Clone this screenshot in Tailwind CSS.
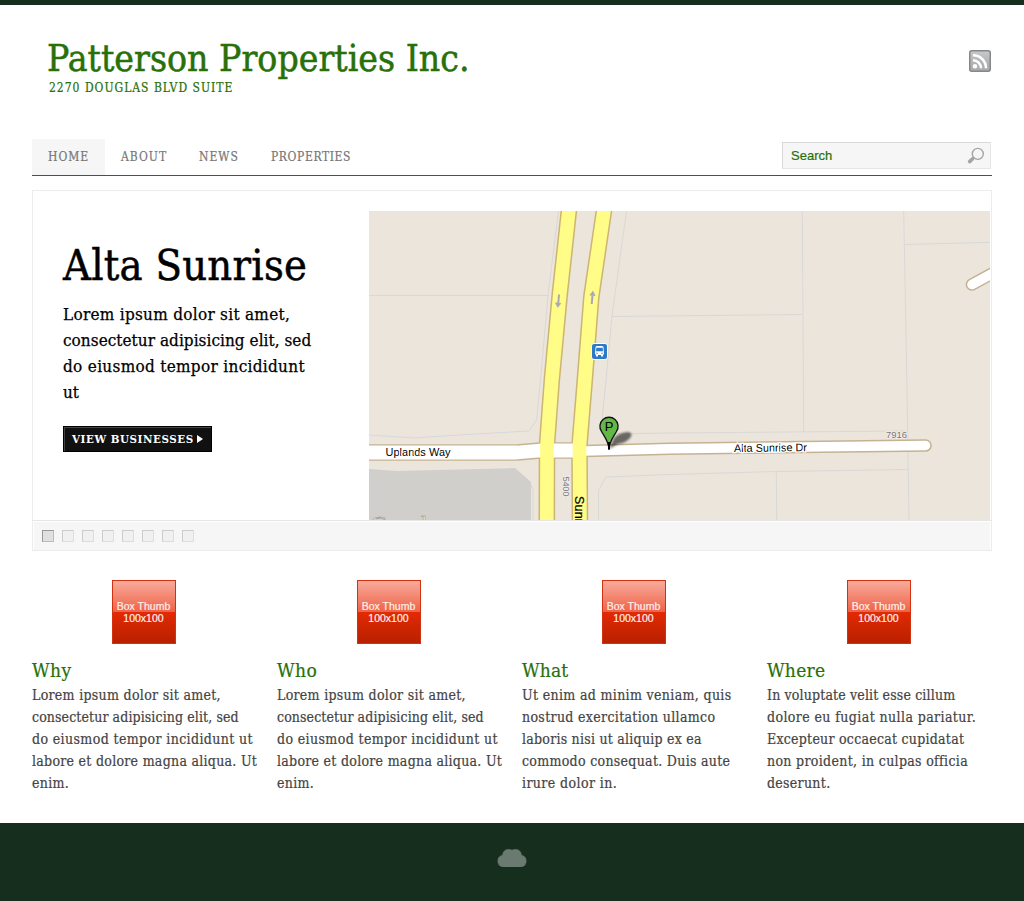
<!DOCTYPE html>
<html lang="en">
<head>
<meta charset="utf-8">
<title>Patterson Properties Inc.</title>
<script src="https://cdn.jsdelivr.net/npm/@tailwindcss/browser@4"></script>
</head>
<body class="bg-white border-t-[5px] border-[#152e1e] font-['Droid_Serif','DejaVu_Serif_Condensed','DejaVu_Serif',serif] font-stretch-condensed text-[14px] leading-[22px] text-[#444]">
<div class="mx-8 h-[818px]">
  <header class="flex justify-between h-[134px] pt-8">
    <div class="pl-[15px] text-[#287008]">
      <h1 class="text-[37px] leading-[44px] whitespace-nowrap [-webkit-text-stroke:0.5px_currentColor]">Patterson Properties Inc.</h1>
      <p class="-mt-px pl-0.5 text-[12px] leading-4 tracking-[1px] [-webkit-text-stroke:0.2px_currentColor]">2270 DOUGLAS BLVD SUITE</p>
    </div>
    <svg class="mt-[13px] mr-px" width="22" height="22" viewBox="0 0 22 22">
      <defs><linearGradient id="rss" x1="0" y1="0" x2="0" y2="1"><stop offset="0" stop-color="#c9cacb"/><stop offset=".5" stop-color="#b5b6b7"/><stop offset="1" stop-color="#a8aaab"/></linearGradient></defs>
      <rect x=".75" y=".75" width="20.5" height="20.5" rx="2" fill="url(#rss)" stroke="#858789" stroke-width="1.5"/>
      <circle cx="6" cy="16.200" r="2.200" fill="#fff"/>
      <path d="M4 10.200A8 8 0 0 1 12 18.200M4 5.200A13 13 0 0 1 17 18.200" fill="none" stroke="#fff" stroke-width="2.500"/>
    </svg>
  </header>
  <nav class="flex justify-between h-[37px] border-b border-[#287008] text-[12px] leading-9 tracking-[1px] text-[#777]">
    <ul class="flex [-webkit-text-stroke:0.2px_currentColor]">
      <li class="px-4 w-[73px] bg-[#f6f6f6]">HOME</li>
      <li class="px-4 w-[78px]">ABOUT</li>
      <li class="px-4 w-[72px]">NEWS</li>
      <li class="px-4 tracking-[0.6px]">PROPERTIES</li>
    </ul>
    <div class="flex items-center justify-between mt-[3px] mr-px w-[209px] h-[27px] pl-2 pr-[5px] bg-[#f6f6f6] border border-t-[#d9d9d9] border-l-[#d9d9d9] border-r-[#e6e6e6] border-b-[#e6e6e6] font-['Liberation_Sans',sans-serif] text-[13px] leading-[25px] tracking-normal text-[#287008] [-webkit-text-stroke:0.2px_currentColor]">
      Search
      <svg width="18" height="18" viewBox="0 0 18 18" fill="none" stroke="#a5a5a5"><circle cx="10.800" cy="6.900" r="5.500" stroke-width="1.400"/><path d="M6.600 10.800L5 12.400" stroke-width="2"/><path d="M5.600 11.800L2.600 14.600" stroke-width="3.600" stroke-linecap="round"/></svg>
    </div>
  </nav>

  <section class="mt-[14px] h-[361px] border border-[#ececec]">
    <div class="flex h-[329px]">
      <div class="w-[336px] pl-[30px] pt-12 text-black whitespace-nowrap">
        <h2 class="text-[43px] leading-[52px] tracking-[0.25px] [-webkit-text-stroke:0.5px_currentColor]">Alta Sunrise</h2>
        <p class="mt-[10px] text-[17px] leading-[26px] [-webkit-text-stroke:0.25px_currentColor]">
          <span class="block tracking-[0.28px]">Lorem ipsum dolor sit amet,</span>
          <span class="block tracking-[0.04px]">consectetur adipisicing elit, sed</span>
          <span class="block tracking-[0.31px]">do eiusmod tempor incididunt</span>
          <span class="block">ut</span>
        </p>
        <a class="mt-[21px] flex w-[149px] h-[26px] border border-black bg-[#111]">
          <span class="flex items-center flex-1 border-t border-l border-[#444] pl-[7px] text-white font-bold text-[11.5px] tracking-[0.55px] leading-6"><span class="-mt-0.5">VIEW BUSINESSES</span>
            <svg class="ml-[3px] -mt-0.5" width="6" height="8" viewBox="0 0 6 8"><path d="M0 0L6 4L0 8z" fill="#fff"/></svg></span>
        </a>
      </div>
      <svg class="mt-5 shrink-0" width="621" height="309" viewBox="369 211 621 309" font-family="Liberation Sans, Arial, sans-serif">
        <defs><filter id="blur" x="-50%" y="-50%" width="200%" height="200%"><feGaussianBlur stdDeviation="1.300"/></filter></defs>
        <rect x="369" y="211" width="621" height="309" fill="#ece5dc"/>
        <path d="M369 469L397 471L515 468L531 482V520H369z" fill="#d0cfcb"/>
        <g fill="none" stroke="#d9d8d7" stroke-width="1">
          <path d="M558.500 211L548 295L540.500 380L536.500 420L529 431L450 435.500L415 438L369 435"/>
          <path d="M369 295.500H548"/>
          <path d="M626.500 211L612 316L606 380L602 420L606 434L670 433L906 431"/>
          <path d="M612 316.500L803 314.500M802.300 211L803.700 432M903.700 211L907 390L909 520M905 244.500L990 242.300"/>
          <path d="M598.500 520V490L606 477L670 474.500L776 471.500L908 469.500M776.300 472L776.700 520M531 485L533 490V520"/>
        </g>
        <g fill="none" stroke-linejoin="round">
          <g stroke="#c5b292">
            <path d="M360 452.500H517L540 450.500L586 450.500" stroke-width="16.500"/>
            <path d="M575 451.200L670 448.700L925.500 445.500M972 284.500L1005 266.500" stroke-width="12.600" stroke-linecap="round"/>
          </g>
          <g stroke="#ccb472" stroke-width="16.600">
            <path d="M569.500 205L559.700 295L551.800 380L547 445L546.800 530"/>
            <path d="M604.800 205L591.300 297L584.800 380L579.500 445L580 530"/>
          </g>
          <g stroke="#fff">
            <path d="M360 452.500H517L540 450.500L586 450.500" stroke-width="13.800"/>
            <path d="M575 451.200L670 448.700L925.500 445.500M972 284.500L1005 266.500" stroke-width="9.600" stroke-linecap="round"/>
          </g>
          <g stroke="#fffc88" stroke-width="13.600">
            <path d="M569.500 205L559.700 295L551.800 380L547 445L546.800 530"/>
            <path d="M604.800 205L591.300 297L584.800 380L579.500 445L580 530"/>
          </g>
        </g>
        <g stroke="#aaa6b8" stroke-width="2" fill="#aaa6b8">
          <path d="M559 294.500L558.300 303"/><path d="M555.400 302.800L560.900 303.300L557.800 307.500z" stroke-width=".5"/>
          <path d="M591.700 304L592.500 295.500"/><path d="M589.800 295.200L595.300 295.700L592.900 291z" stroke-width=".5"/>
        </g>
        <rect x="591.500" y="343.500" width="16" height="16" rx="2.500" fill="#2d7bc7" stroke="#fff"/>
        <path d="M595.500 347.500Q595.500 346 597 346H602Q603.500 346 603.500 347.500L604 354.500H603V356.500H601V355H598V356.500H596V354.500H595z" fill="#fff"/>
        <path d="M596.300 347.800H602.700L603 351.300H596z" fill="#2d7bc7"/><path d="M596.300 352.700h1.400v1h-1.400zM601.300 352.700h1.400v1h-1.400z" fill="#2d7bc7"/>
        <path d="M609 449L614 438Q618 433 628 432Q634 433 630 438Q626 443 618 444z" fill="#000" opacity=".55" filter="url(#blur)"/>
        <path d="M609 449.500C608.500 441 604.500 437 601.500 431.500A9.100 9.100 0 1 1 616.500 431.500C613.500 437 609.500 441 609 449.500z" fill="#62b746" stroke="#111" stroke-width="1.300"/>
        <path d="M609 442V449.500" stroke="#000" stroke-width="2"/>
        <text x="609" y="430.500" font-size="13" text-anchor="middle" fill="#000">P</text>
        <g fill="#000" font-size="11" stroke="#fff" stroke-width="2.500" paint-order="stroke">
          <text x="385.500" y="456" textLength="65">Uplands Way</text>
          <text x="734" y="452" textLength="73" transform="rotate(-.7 734 452)">Alta Sunrise Dr</text>
        </g>
        <g fill="#777" font-size="9.500" stroke="#f3eee8" stroke-width="1.500" paint-order="stroke">
          <text x="886" y="438.300" textLength="21">7916</text>
          <text transform="translate(563 476.500) rotate(90)" textLength="20">5400</text>
        </g>
        <text transform="translate(575 496) rotate(90)" font-size="12.500" fill="#000" stroke="#000" stroke-width=".2" letter-spacing=".2">Sunrise</text>
        <text x="371" y="531.500" font-family="Liberation Serif, serif" font-size="22.500" fill="#fff" fill-opacity=".8" stroke="#8d8d8b" stroke-width=".6">Google</text>
      </svg>
    </div>
    <div class="h-[30px] border-t border-[#e5e5e5]">
      <div class="flex gap-2 h-[29px] border border-b-0 border-white bg-[#f6f6f6] pl-2 pt-2">
        <i class="size-3 bg-[#e0e0e0] border border-[#999] border-r-[#bbb] border-b-[#bbb]"></i>
        <i class="size-3 bg-[#f0f0f0] border border-[#ccc] border-r-[#ddd] border-b-[#ddd]"></i>
        <i class="size-3 bg-[#f0f0f0] border border-[#ccc] border-r-[#ddd] border-b-[#ddd]"></i>
        <i class="size-3 bg-[#f0f0f0] border border-[#ccc] border-r-[#ddd] border-b-[#ddd]"></i>
        <i class="size-3 bg-[#f0f0f0] border border-[#ccc] border-r-[#ddd] border-b-[#ddd]"></i>
        <i class="size-3 bg-[#f0f0f0] border border-[#ccc] border-r-[#ddd] border-b-[#ddd]"></i>
        <i class="size-3 bg-[#f0f0f0] border border-[#ccc] border-r-[#ddd] border-b-[#ddd]"></i>
        <i class="size-3 bg-[#f0f0f0] border border-[#ccc] border-r-[#ddd] border-b-[#ddd]"></i>
      </div>
    </div>
  </section>

  <section class="mt-[29px] grid grid-cols-4 gap-5 whitespace-nowrap [-webkit-text-stroke:0.2px_currentColor]">
    <article>
      <div class="mx-auto size-16 -translate-x-px pt-[19px] border border-[#d13210] bg-[linear-gradient(#f8ab9b,#ef6248_50%,#e22a04_50%,#b92000)] text-center font-['Liberation_Sans',sans-serif] text-[10.5px] leading-[12px] text-[#fff0ec]">Box Thumb<br>100x100</div>
      <h3 class="mt-[13px] mb-px text-[19px] leading-[26px] tracking-[0.4px] text-[#287008]">Why</h3>
      <p>
        <span class="block tracking-[0.3px]">Lorem ipsum dolor sit amet,</span>
        <span class="block tracking-[0.1px]">consectetur adipisicing elit, sed</span>
        <span class="block tracking-[0.38px]">do eiusmod tempor incididunt ut</span>
        <span class="block tracking-[0.28px]">labore et dolore magna aliqua. Ut</span>
        <span class="block tracking-[0.3px]">enim.</span>
      </p>
    </article>
    <article>
      <div class="mx-auto size-16 -translate-x-px pt-[19px] border border-[#d13210] bg-[linear-gradient(#f8ab9b,#ef6248_50%,#e22a04_50%,#b92000)] text-center font-['Liberation_Sans',sans-serif] text-[10.5px] leading-[12px] text-[#fff0ec]">Box Thumb<br>100x100</div>
      <h3 class="mt-[13px] mb-px text-[19px] leading-[26px] tracking-[0.4px] text-[#287008]">Who</h3>
      <p>
        <span class="block tracking-[0.3px]">Lorem ipsum dolor sit amet,</span>
        <span class="block tracking-[0.1px]">consectetur adipisicing elit, sed</span>
        <span class="block tracking-[0.38px]">do eiusmod tempor incididunt ut</span>
        <span class="block tracking-[0.28px]">labore et dolore magna aliqua. Ut</span>
        <span class="block tracking-[0.3px]">enim.</span>
      </p>
    </article>
    <article>
      <div class="mx-auto size-16 -translate-x-px pt-[19px] border border-[#d13210] bg-[linear-gradient(#f8ab9b,#ef6248_50%,#e22a04_50%,#b92000)] text-center font-['Liberation_Sans',sans-serif] text-[10.5px] leading-[12px] text-[#fff0ec]">Box Thumb<br>100x100</div>
      <h3 class="mt-[13px] mb-px text-[19px] leading-[26px] tracking-[0.2px] text-[#287008]">What</h3>
      <p>
        <span class="block tracking-[0.34px]">Ut enim ad minim veniam, quis</span>
        <span class="block tracking-[0.33px]">nostrud exercitation ullamco</span>
        <span class="block tracking-[0.24px]">laboris nisi ut aliquip ex ea</span>
        <span class="block tracking-[0.3px]">commodo consequat. Duis aute</span>
        <span class="block tracking-[0.4px]">irure dolor in.</span>
      </p>
    </article>
    <article>
      <div class="mx-auto size-16 -translate-x-px pt-[19px] border border-[#d13210] bg-[linear-gradient(#f8ab9b,#ef6248_50%,#e22a04_50%,#b92000)] text-center font-['Liberation_Sans',sans-serif] text-[10.5px] leading-[12px] text-[#fff0ec]">Box Thumb<br>100x100</div>
      <h3 class="mt-[13px] mb-px text-[19px] leading-[26px] tracking-[0.3px] text-[#287008]">Where</h3>
      <p>
        <span class="block tracking-[0.15px]">In voluptate velit esse cillum</span>
        <span class="block tracking-[0.4px]">dolore eu fugiat nulla pariatur.</span>
        <span class="block tracking-[0.25px]">Excepteur occaecat cupidatat</span>
        <span class="block tracking-[0.32px]">non proident, in culpas officia</span>
        <span class="block tracking-[0.3px]">deserunt.</span>
      </p>
    </article>
  </section>
</div>
<footer class="flex justify-center h-[78px] pt-[26px] bg-[#152e1e]">
  <svg width="30" height="18" viewBox="0 0 30 18"><path d="M6 18A6 6 0 0 1 5.500 6.200A6.200 6.200 0 0 1 14.500 .9Q15 1.200 15.500 .9A6.200 6.200 0 0 1 24.500 6.200A6 6 0 0 1 24 18z" fill="#6b7a71" stroke="#6b7a71" stroke-width=".5"/></svg>
</footer>
</body>
</html>
